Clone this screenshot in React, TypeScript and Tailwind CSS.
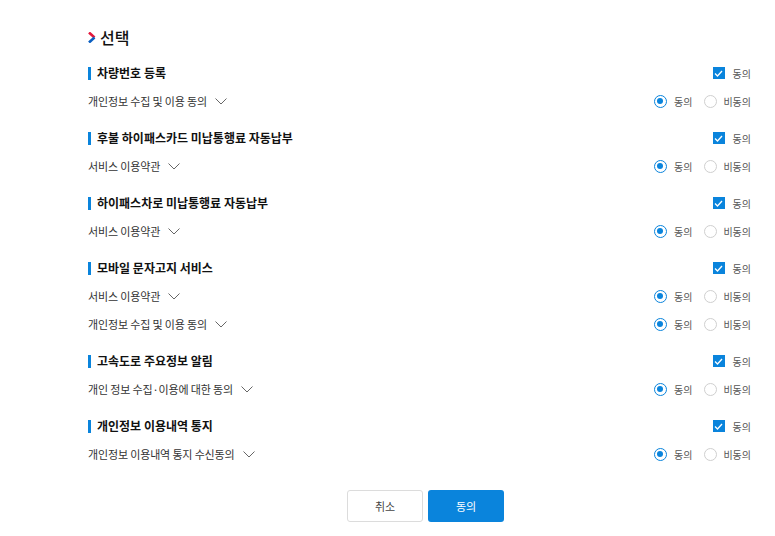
import React from "react";

const KR = { fontFamily: '"Noto Sans CJK KR", "Noto Sans", sans-serif' };

type Row = { label: string };
type Section = { title: string; rows: Row[] };

const sections: Section[] = [
  { title: "차량번호 등록", rows: [{ label: "개인정보 수집 및 이용 동의" }] },
  { title: "후불 하이패스카드 미납통행료 자동납부", rows: [{ label: "서비스 이용약관" }] },
  { title: "하이패스차로 미납통행료 자동납부", rows: [{ label: "서비스 이용약관" }] },
  {
    title: "모바일 문자고지 서비스",
    rows: [{ label: "서비스 이용약관" }, { label: "개인정보 수집 및 이용 동의" }],
  },
  { title: "고속도로 주요정보 알림", rows: [{ label: "개인 정보 수집·이용에 대한 동의" }] },
  { title: "개인정보 이용내역 통지", rows: [{ label: "개인정보 이용내역 통지 수신동의" }] },
];

function Checkbox() {
  return (
    <span className="flex h-[12px] w-[12px] items-center justify-center bg-[#0a84dc]">
      <svg width="9" height="7" viewBox="0 0 9 7" fill="none">
        <path d="M1 3.5 L3.5 6 L8 1" stroke="white" strokeWidth="1.3" />
      </svg>
    </span>
  );
}

function Radio({ on }: { on?: boolean }) {
  return on ? (
    <span className="flex h-[13px] w-[13px] shrink-0 items-center justify-center rounded-full border border-[#0a84dc] bg-white">
      <span className="block h-[6px] w-[6px] rounded-full bg-[#0a84dc]" />
    </span>
  ) : (
    <span className="block h-[13px] w-[13px] shrink-0 rounded-full border border-[#cfcfcf] bg-white" />
  );
}

function Chevron() {
  return (
    <svg width="12" height="7" viewBox="0 0 12 7" fill="none" className="ml-[8px]">
      <path d="M0.5 0.5 L6 6 L11.5 0.5" stroke="#666" strokeWidth="1" />
    </svg>
  );
}

export default function App() {
  return (
    <div className="h-[536px] w-[775px] overflow-hidden bg-white text-[#222]" style={KR}>
      <div className="pl-[88px] pr-[24px]">
        <div className="mt-[27px] flex h-[20px] items-center">
          <svg width="8" height="11" viewBox="0 0 8 11" fill="none">
            <path d="M1 0.5 L6.5 5.5" stroke="#e3183d" strokeWidth="2.6" />
            <path d="M6.5 5.5 L1 10.5" stroke="#0b5fc1" strokeWidth="2.6" />
          </svg>
          <span className="ml-[4px] text-[16px] font-medium leading-[20px] text-[#111]">선택</span>
        </div>

        <div className="mt-[12px]">
          {sections.map((s, i) => (
            <div key={i} className={i === 0 ? "" : "mt-[9px]"}>
              <div className="flex h-[28px] items-center justify-between">
                <div className="flex items-center">
                  <span className="block h-[13px] w-[3px] bg-[#0a84dc]" />
                  <span className="ml-[6px] text-[12px] font-bold text-[#111]">{s.title}</span>
                </div>
                <div className="flex items-center">
                  <Checkbox />
                  <span className="ml-[8px] text-[10px] text-[#555]">동의</span>
                </div>
              </div>
              {s.rows.map((r, j) => (
                <div key={j} className="flex h-[28px] items-center justify-between">
                  <div className="flex items-center">
                    <span className="text-[11px] tracking-[-0.15px] text-[#333]">{r.label}</span>
                    <Chevron />
                  </div>
                  <div className="flex items-center">
                    <Radio on />
                    <span className="ml-[7px] text-[10px] text-[#555]">동의</span>
                    <span className="ml-[12px] flex">
                      <Radio />
                    </span>
                    <span className="ml-[6px] text-[10px] text-[#555]">비동의</span>
                  </div>
                </div>
              ))}
            </div>
          ))}
        </div>
      </div>

      <div className="mt-[22px] flex justify-center gap-[5px] pl-[88px] pr-[12px]">
        <button className="h-[32px] w-[76px] rounded-[3px] border border-[#dcdcdc] bg-white text-[11px] text-[#444]">
          취소
        </button>
        <button className="h-[32px] w-[76px] rounded-[3px] bg-[#0a84dc] text-[11px] text-white">
          동의
        </button>
      </div>
    </div>
  );
}
